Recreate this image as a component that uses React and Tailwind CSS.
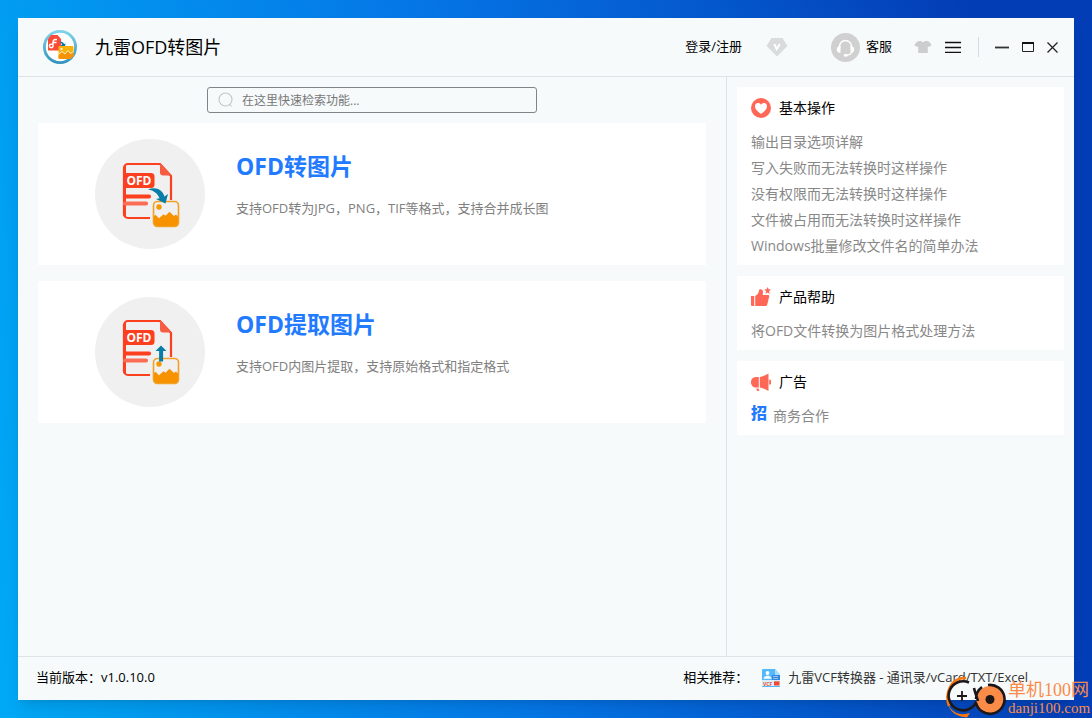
import React, { useState } from 'react';

const helpLinks = [
  '输出目录选项详解',
  '写入失败而无法转换时这样操作',
  '没有权限而无法转换时这样操作',
  '文件被占用而无法转换时这样操作',
  'Windows批量修改文件名的简单办法',
];

const tools = [
  { id: 'convert', title: 'OFD转图片', desc: '支持OFD转为JPG，PNG，TIF等格式，支持合并成长图' },
  { id: 'extract', title: 'OFD提取图片', desc: '支持OFD内图片提取，支持原始格式和指定格式' },
];

function Logo() {
  return (
    <svg viewBox="0 0 34 34" className="h-[34px] w-[34px]" aria-hidden="true">
      <defs>
        <linearGradient id="ring" x1="0" y1="0" x2="0" y2="1">
          <stop offset="0" stopColor="#7fd3e8" />
          <stop offset="1" stopColor="#3294bd" />
        </linearGradient>
      </defs>
      <circle cx="17" cy="17" r="15.6" fill="#fff" stroke="url(#ring)" strokeWidth="2.8" />
      <path d="M8 5h6.500L18 9v11.500H5V9z" fill="#fb4b38" />
      <path d="M14 9.500h-1.500c-2 0-2.500 1.200-2.500 3v3.300c0 2.600-3.600 2.400-3.600.2 0-2 2-2 3.600-1.800M10 12.500h3.500" fill="none" stroke="#fff" strokeWidth="1.400" />
      <path d="M16.500 11.500c3 0 4 1 4.500 2.600l1.700-.6-1.400 4.500-4-2.600 1.700-.5c-.4-1.600-1-2.500-2.500-3.400z" fill="#0877a5" />
      <path d="M16 16h13.500a1 1 0 0 1 1 1v9l-3.500 3H17a1.500 1.500 0 0 1-1.500-1.500v-11z" fill="#f8b20c" />
      <path d="M15.500 25l3.500-3.500 3 2.500 3-3.500 2.500 3 3-2v4.500L27 29H17a1.500 1.500 0 0 1-1.500-1.500z" fill="#f79305" />
      <path d="M15.500 24.500l3.500-3 3 2.500 3-3.500 2.500 3 3-2" fill="none" stroke="#fff" strokeWidth=".8" />
      <circle cx="18.500" cy="19" r="1.100" fill="#fff" />
    </svg>
  );
}

function OfdIcon({ type }) {
  return (
    <svg viewBox="0 0 110 110" className="h-[110px] w-[110px] shrink-0" aria-hidden="true">
      <circle cx="55" cy="55" r="55" fill="#f0f0f0" />
      <g transform={type === 'extract' ? 'translate(0 -1)' : undefined}>
        <path d="M55 79H33a4 4 0 0 1-4-4V29a4 4 0 0 1 4-4h32l11 12v24" fill="none" stroke="#fb3f1f" strokeWidth="2.200" />
        <path d="M28 29v47l3 3V26z" fill="#fb3f1f" />
        <path d="M65 24.500v9a3 3 0 0 0 3 3h8.500z" fill="#f65d42" />
        <rect x="28" y="34" width="31.500" height="15" rx="3.500" fill="#fb3f1f" />
        <text x="44" y="46" textAnchor="middle" fontSize="12" fontWeight="700" fill="#fff" fontFamily="Open Sans, sans-serif">OFD</text>
        <rect x="28" y="55.500" width="28" height="4" rx="1.800" fill="#fb3f1f" />
        <rect x="28" y="62.500" width="25" height="4" rx="1.800" fill="#fb6d54" />
        <rect x="58.500" y="62.500" width="25" height="25" rx="4" fill="#f0f0f0" stroke="#f3a126" strokeWidth="1.600" />
        <circle cx="64" cy="68" r="2.700" fill="#f59706" />
        <path d="M59 77l1.500-1.200 3.500 3.500 4.500-4 2 1.500 4-4L79 77l2-1.500 2 2V84a3 3 0 0 1-3 3H62a3 3 0 0 1-3-3z" fill="#f79300" />
        {type === 'convert' ? (
          <path d="M53 50.500c8-3.200 14.500.5 16.500 7l3.500-2.500-2.500 9.500-9.500-4.500 3.500-.7c-2-5-5.500-7.800-11.500-8.800z" fill="#087da7" />
        ) : (
          <path d="M66 49.500l5.500 5.500h-3.400v10.500h-4V55h-3.600z" fill="#087da7" />
        )}
      </g>
    </svg>
  );
}

function HeartIcon() {
  return (
    <svg viewBox="0 0 20 20" className="h-5 w-5" aria-hidden="true">
      <circle cx="10" cy="10" r="10" fill="#ff6857" />
      <path d="M10 16C7 13.800 4 11.300 4 8.300 4 4.700 8.300 4 10 6.800 11.700 4 16 4.700 16 8.300c0 3-3 5.500-6 7.700z" fill="#fff" />
    </svg>
  );
}

function ThumbIcon() {
  return (
    <svg viewBox="0 0 20 20" className="h-5 w-5" fill="#ff6857" aria-hidden="true">
      <path d="M0 9h3.200v10H1a1 1 0 0 1-1-1z" />
      <path d="M4.200 9C7 7.500 7.800 5.500 8 3.500c.2-2 4.200-1.700 4 1.500L11.700 8H17a1.200 1.200 0 0 1 1.200 1.500l-2 8.300A1.600 1.600 0 0 1 14.600 19H4.200z" />
      <path d="M16.600 0l1 2.300 2.400.3-1.900 1.700.6 2.600-2.100-1.300-2.100 1.300.6-2.600-1.900-1.700 2.400-.3z" />
    </svg>
  );
}

function HornIcon() {
  return (
    <svg viewBox="0 0 20 20" className="h-5 w-5" fill="#ff6857" aria-hidden="true">
      <path d="M7.800 5v10.500H4.500a4.500 5.200 0 0 1 0-10.500z" />
      <path d="M8.800 5C12 4.500 14.500 3 17.500 1.500v17.500C14.500 17.500 12 16 8.800 15.500z" />
      <path d="M18.200 7.500a2.300 2.600 0 0 1 0 5.200zM5 16.500h2.500l1 2-2 .8z" />
    </svg>
  );
}

function VcfIcon() {
  return (
    <svg viewBox="0 0 18 18" className="h-[18px] w-[18px]" aria-hidden="true">
      <path d="M1 0h12l5 6v12H1a1 1 0 0 1-1-1V1a1 1 0 0 1 1-1z" fill="#54b9fa" />
      <path d="M10 6h8v6h-8z" fill="#3186dd" />
      <path d="M13 0l5 6h-5z" fill="#a7defc" />
      <circle cx="5.500" cy="4" r="1.900" fill="#fff" />
      <path d="M1.800 9.500c.4-3.500 7-3.500 7.400 0zM11 7.500h5M11 9.500h5" fill="#fff" stroke="#fff" strokeWidth=".5" />
      <rect y="11" width="18" height="6" fill="#d9effc" />
      <text x="1" y="16.500" fontSize="5" fontWeight="700" fill="#f04b32" fontFamily="Open Sans, sans-serif">VCF</text>
      <rect x="12" y="12.300" width="5.500" height="4.200" fill="#f04b32" />
    </svg>
  );
}

function SidePanel({ icon, title, children }) {
  return (
    <section className="bg-white px-3.5 pt-2.5 pb-1.5">
      <h2 className="flex h-[22px] items-center gap-2 text-sm text-black">
        {icon}
        {title}
      </h2>
      <ul className="mt-2.5">{children}</ul>
    </section>
  );
}

function SideLink({ icon, children }) {
  return (
    <li className="h-[26px] text-sm leading-[26px] text-[#888]">
      <a href="#" className="flex gap-1.5 hover:text-[#227bff]">
        {icon}
        {children}
      </a>
    </li>
  );
}

function Header() {
  return (
    <header className="flex h-[59px] items-center border-b border-[#dfe3e5] pr-4 pl-[25px]">
      <Logo />
      <h1 className="ml-[18px] text-lg text-black">九雷OFD转图片</h1>
      <div className="ml-auto flex items-center text-[13px] text-black">
        <button type="button">登录/注册</button>
        <button type="button" aria-label="VIP" className="ml-6">
          <svg viewBox="0 0 22 20" className="h-5 w-[22px]">
            <path d="M5.500 1h11L21.500 9 11 19.500.5 9z" fill="#d9dcdd" />
            <path d="M8.300 7l2.400 5.200L13.800 7" fill="none" stroke="#fff" strokeWidth="2" />
          </svg>
        </button>
        <button type="button" className="ml-[43px] flex items-center gap-1.5">
          <svg viewBox="0 0 29 29" className="h-[29px] w-[29px]">
            <circle cx="14.500" cy="14.500" r="14.500" fill="#d0d0d0" />
            <path d="M8.500 15v-1.500a6 6 0 0 1 12 0V15" fill="none" stroke="#fff" strokeWidth="1.500" />
            <path d="M9.500 13v7C4.500 20 4.500 13 9.500 13zM19.500 13v7c5 0 5-7 0-7z" fill="#fff" />
            <path d="M21 19c-1 2.500-3 3.200-6 3.200" fill="none" stroke="#fff" strokeWidth="1.200" />
            <ellipse cx="14.800" cy="22.300" rx="2" ry="1.500" fill="#fff" />
          </svg>
          客服
        </button>
        <button type="button" aria-label="换肤" className="ml-[22px]">
          <svg viewBox="0 0 18 14" className="h-3.5 w-[18px]">
            <path d="M5 1h2c1 1.500 3 1.500 4 0h2c2 .3 4 2 4.500 4.500L14.500 7l-.7-.8V13H4.200V6.200L3.500 7 .5 5.500C1 3 3 1.300 5 1z" fill="#cbcdce" />
          </svg>
        </button>
        <button type="button" aria-label="菜单" className="ml-3">
          <svg viewBox="0 0 18 12" className="h-3 w-[18px]">
            <path d="M1 1.500h16M1 6.500h16M1 11.500h16" stroke="#111" strokeWidth="1.400" />
          </svg>
        </button>
        <span className="ml-4 h-5 w-px bg-[#d8dbdd]" />
        <button type="button" aria-label="最小化" className="ml-4">
          <svg viewBox="0 0 14 10" className="h-2.5 w-3.5">
            <path d="M0 5.500h14" stroke="#333" strokeWidth="1.800" />
          </svg>
        </button>
        <button type="button" aria-label="最大化" className="ml-[13px]">
          <svg viewBox="0 0 12 10" className="h-2.5 w-3">
            <path d="M.5.500h11v9H.5z" fill="none" stroke="#222" />
            <path d="M0 1h12" stroke="#111" strokeWidth="2" />
          </svg>
        </button>
        <button type="button" aria-label="关闭" className="ml-[13px]">
          <svg viewBox="0 0 11 11" className="h-[11px] w-[11px]">
            <path d="M.5.500l10 10M10.500.500l-10 10" stroke="#222" strokeWidth="1.300" />
          </svg>
        </button>
      </div>
    </header>
  );
}

function Footer() {
  return (
    <footer className="flex h-11 items-center border-t border-[#dfe3e5] pr-[46px] pb-0.5 pl-[18px] text-[13px] text-black">
      <p>当前版本：v1.0.10.0</p>
      <span className="ml-auto">相关推荐：</span>
      <a href="#" className="ml-3.5 flex items-center gap-2 text-[#333]">
        <VcfIcon />
        九雷VCF转换器 - 通讯录/vCard/TXT/Excel
      </a>
    </footer>
  );
}

function SiteMark() {
  return (
    <div className="absolute right-0 bottom-0 flex items-end text-[#fb8b48]">
      <svg viewBox="0 0 64 42" className="h-[42px] w-16" aria-hidden="true">
        <path d="M22 2C8 1 0 16 5 30" fill="none" stroke="#f97608" strokeWidth="2.600" />
        <path d="M4 28c4 9 12 12 22 9l-3 4.500C13 41 6 36 4 28z" fill="#f97608" />
        <path d="M25 6.500a14.500 14.500 0 1 0 7.500 19" fill="none" stroke="#1e1718" strokeWidth="2.600" />
        <path d="M18 15v10M13 20h10" stroke="#1e1718" strokeWidth="1.800" />
        <circle cx="46" cy="23.500" r="13.500" fill="#fb8c48" />
        <path d="M44 9a14.500 14.500 0 1 1-12 18" fill="none" stroke="#1e1718" strokeWidth="2.600" />
        <path d="M30 12c1 5 3 9 4 13M38 11c-4 3-6 8-6 12" fill="none" stroke="#1e1718" strokeWidth="2.600" />
        <circle cx="46" cy="23.500" r="4.500" fill="#1e1718" />
      </svg>
      <div className="w-[84px] pb-0.5 font-['Liberation_Serif','Noto_Sans_CJK_SC',serif] whitespace-nowrap">
        <p className="text-lg leading-5">单机100网</p>
        <p className="text-[15px] leading-4">danji100.com</p>
      </div>
    </div>
  );
}

export default function App() {
  const [query, setQuery] = useState('');

  return (
    <div className="relative flex min-h-screen flex-col bg-linear-[80deg] from-[#00a9f5] via-[#0575e6] via-45% to-[#033db5] to-90% p-[18px] font-['Open_Sans','Noto_Sans_CJK_SC',sans-serif]">
      <div className="flex grow flex-col bg-[#f6fafb] shadow-lg">
        <Header />
        <div className="flex grow">
          <main className="flex grow flex-col gap-4 px-5 pt-2.5">
            <label className="-mb-1.5 flex h-[26px] w-[330px] items-center gap-2 self-center rounded-[3px] border border-[#808486] px-2.5">
              <svg viewBox="0 0 16 16" className="h-4 w-4 shrink-0" fill="none" stroke="#c5c8ca" aria-hidden="true">
                <circle cx="7.500" cy="7.500" r="6.500" strokeWidth="1.200" />
                <path d="M11.500 12l2 2.500" strokeWidth="1.200" />
              </svg>
              <input
                type="text"
                aria-label="检索功能"
                placeholder="在这里快速检索功能..."
                value={query}
                onChange={(e) => setQuery(e.target.value)}
                className="w-full bg-transparent pt-0.5 text-xs text-[#777] outline-none placeholder:text-[#777]"
              />
            </label>

            {tools.map((tool) => (
              <a key={tool.id} href="#" className="flex h-[142px] bg-white pt-4 pl-[57px]">
                <OfdIcon type={tool.id} />
                <div className="ml-[31px] pt-[11px]">
                  <h2 className="text-[23px] leading-8 font-bold text-[#227bff]">{tool.title}</h2>
                  <p className="mt-4 text-[13px] leading-5 text-[#808080]">{tool.desc}</p>
                </div>
              </a>
            ))}
          </main>

          <aside className="flex w-[348px] shrink-0 flex-col gap-[11px] border-l border-[#dfe3e5] px-2.5 pt-2.5">
            <SidePanel icon={<HeartIcon />} title="基本操作">
              {helpLinks.map((text) => (
                <SideLink key={text}>{text}</SideLink>
              ))}
            </SidePanel>
            <SidePanel icon={<ThumbIcon />} title="产品帮助">
              <SideLink>将OFD文件转换为图片格式处理方法</SideLink>
            </SidePanel>
            <SidePanel icon={<HornIcon />} title="广告">
              <SideLink icon={<span className="text-base leading-5 font-black text-[#227bff]">招</span>}>
                商务合作
              </SideLink>
            </SidePanel>
          </aside>
        </div>
        <Footer />
      </div>
      <SiteMark />
    </div>
  );
}
